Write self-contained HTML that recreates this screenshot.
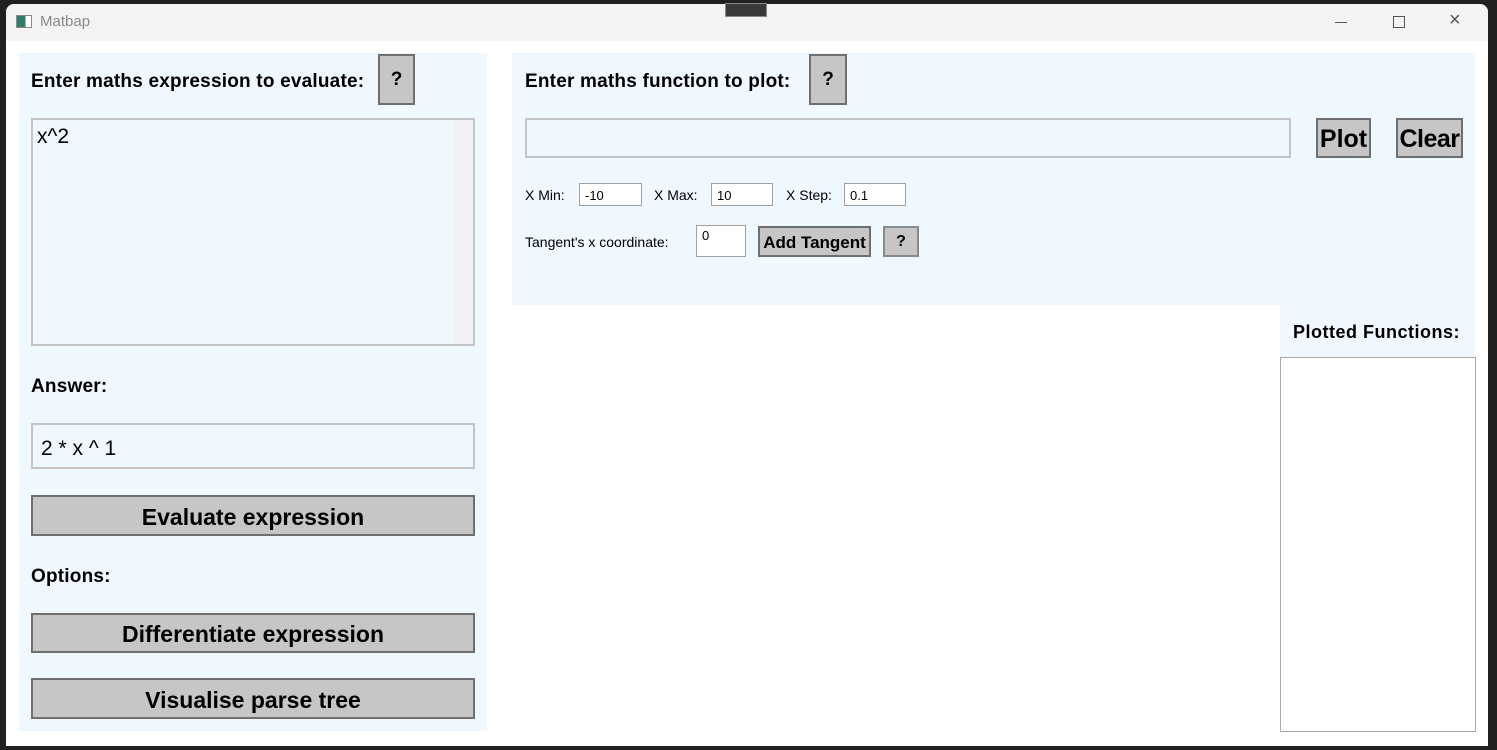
<!DOCTYPE html>
<html><head><style>
*{margin:0;padding:0;box-sizing:border-box}
body{width:1497px;height:750px;background:#202020;position:relative;overflow:hidden;font-family:"Liberation Sans","DejaVu Sans",sans-serif}
.a{position:absolute}
.win{left:6px;top:4px;width:1482px;height:742px;background:#fff;border-radius:8px 8px 0 0;overflow:hidden}
.tb{left:0;top:0;width:1482px;height:37px;background:#f3f3f3}
.p{background:#eff7ff}
.b{font-weight:bold;color:#000;letter-spacing:0.2px}
.btn{background:#c6c6c6;border:2px solid #6f6f6f;display:flex;align-items:center;justify-content:center;font-weight:bold;color:#000}
.tx{background:#eff7ff;border:2px solid #c4c4c4}
.sm{background:#fff;border:1px solid #a0a0a0;font-size:13px;padding:4px 0 0 5px;color:#000}
.lb{font-size:14px;color:#000}
</style></head><body>
<div class="a" style="left:725px;top:3px;width:42px;height:14px;background:#3a3a3a;border:1px solid #888;z-index:5"></div>
<div class="a win">
 <div class="a tb"></div>
 <div class="a" style="left:10px;top:11px;width:16px;height:13px;border:1px solid #888;background:linear-gradient(90deg,#2f7d6a 60%,#fff 60%)"></div>
 <div class="a" style="left:34px;top:9px;font-size:15px;color:#8a8a8a">Matbap</div>
 <div class="a" style="left:1329px;top:18px;width:12px;height:1px;background:#555"></div>
 <div class="a" style="left:1387px;top:12px;width:12px;height:12px;border:1px solid #555"></div>
 <div class="a" style="left:1443px;top:5px;font-size:20px;color:#555">×</div>

 <div class="a p" style="left:13px;top:49px;width:468px;height:678px"></div>
 <div class="a b" style="left:25px;top:67px;font-size:19px">Enter maths expression to evaluate:</div>
 <div class="a btn" style="left:372px;top:50px;width:37px;height:51px;font-size:19px">?</div>
 <div class="a tx" style="left:25px;top:114px;width:444px;height:228px;font-size:21px;padding:5px 0 0 4px">x^2
  <div class="a" style="right:0;top:0;width:20px;height:224px;background:#f0f2f5"></div></div>
 <div class="a b" style="left:25px;top:372px;font-size:19px">Answer:</div>
 <div class="a tx" style="left:25px;top:419px;width:444px;height:46px;font-size:21px;padding:12px 0 0 8px">2 * x ^ 1</div>
 <div class="a btn" style="left:25px;top:491px;width:444px;height:41px;font-size:23px;padding-top:3px">Evaluate expression</div>
 <div class="a b" style="left:25px;top:562px;font-size:19px">Options:</div>
 <div class="a btn" style="left:25px;top:609px;width:444px;height:40px;font-size:23px;padding-top:2px">Differentiate expression</div>
 <div class="a btn" style="left:25px;top:674px;width:444px;height:41px;font-size:23px;padding-top:3px">Visualise parse tree</div>

 <div class="a p" style="left:506px;top:49px;width:963px;height:252px"></div>
 <div class="a b" style="left:519px;top:67px;font-size:19px">Enter maths function to plot:</div>
 <div class="a btn" style="left:803px;top:50px;width:38px;height:51px;font-size:19px">?</div>
 <div class="a tx" style="left:519px;top:114px;width:766px;height:40px"></div>
 <div class="a btn" style="left:1310px;top:114px;width:55px;height:40px;font-size:25px;padding-top:2px">Plot</div>
 <div class="a btn" style="left:1390px;top:114px;width:67px;height:40px;font-size:25px;padding-top:2px;letter-spacing:-0.5px">Clear</div>
 <div class="a lb" style="left:519px;top:183px">X Min:</div>
 <div class="a sm" style="left:573px;top:179px;width:63px;height:23px">-10</div>
 <div class="a lb" style="left:648px;top:183px">X Max:</div>
 <div class="a sm" style="left:705px;top:179px;width:62px;height:23px">10</div>
 <div class="a lb" style="left:780px;top:183px">X Step:</div>
 <div class="a sm" style="left:838px;top:179px;width:62px;height:23px">0.1</div>
 <div class="a lb" style="left:519px;top:230px">Tangent's x coordinate:</div>
 <div class="a sm" style="left:690px;top:221px;width:50px;height:32px;padding-top:2px">0</div>
 <div class="a btn" style="left:752px;top:222px;width:113px;height:31px;font-size:17px;padding-top:2px">Add Tangent</div>
 <div class="a btn" style="left:877px;top:222px;width:36px;height:31px;font-size:16px;border-color:#8a8a8a">?</div>

 <div class="a p" style="left:1274px;top:301px;width:195px;height:52px"></div>
 <div class="a b" style="left:1287px;top:318px;font-size:18px;letter-spacing:0.5px">Plotted Functions:</div>
 <div class="a" style="left:1274px;top:353px;width:196px;height:375px;background:#fff;border:1px solid #a8a8a8"></div>
</div>
</body></html>
